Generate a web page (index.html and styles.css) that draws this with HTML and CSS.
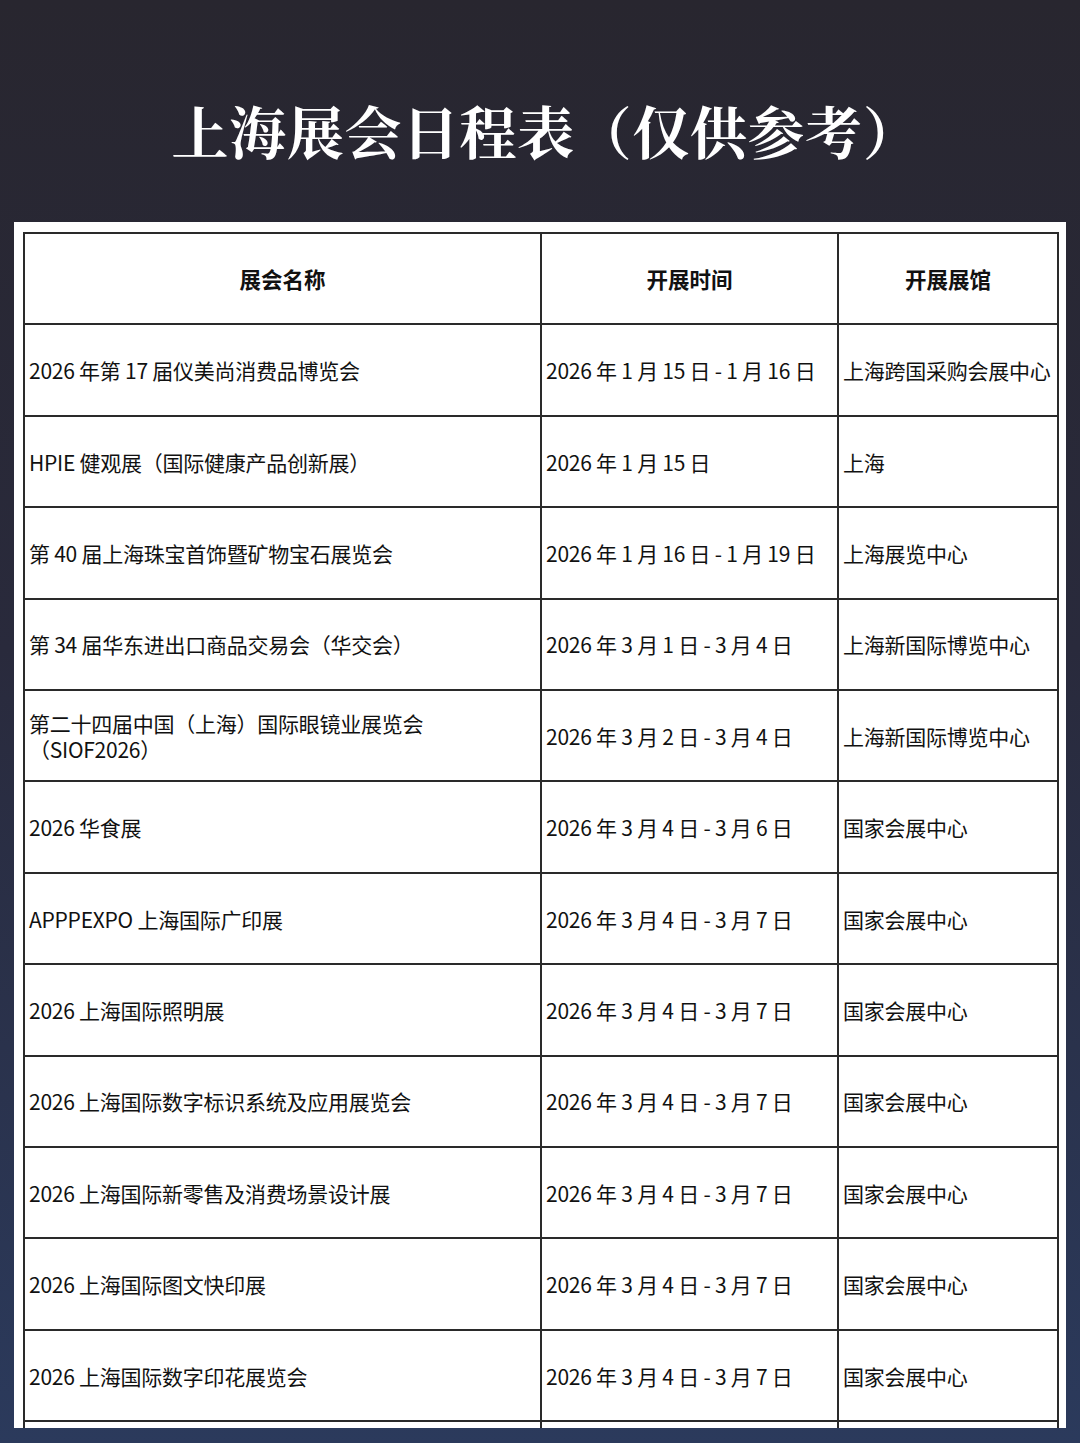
FILE: index.html
```html
<!DOCTYPE html>
<html lang="zh-CN">
<head>
<meta charset="utf-8">
<link rel="stylesheet" href="styles.css">
</head>
<body>
<header class="hero">
  <h1 class="title">上海展会日程表（仅供参考）</h1>
</header>
<main class="panel">
  <table class="schedule">
    <colgroup>
      <col class="c-name"><col class="c-date"><col class="c-venue">
    </colgroup>
    <thead>
      <tr><th>展会名称</th><th>开展时间</th><th>开展展馆</th></tr>
    </thead>
    <tbody>
      <tr><td>2026 年第 17 届仪美尚消费品博览会</td><td>2026 年 1 月 15 日 - 1 月 16 日</td><td>上海跨国采购会展中心</td></tr>
      <tr><td>HPIE 健观展（国际健康产品创新展）</td><td>2026 年 1 月 15 日</td><td>上海</td></tr>
      <tr><td>第 40 届上海珠宝首饰暨矿物宝石展览会</td><td>2026 年 1 月 16 日 - 1 月 19 日</td><td>上海展览中心</td></tr>
      <tr><td>第 34 届华东进出口商品交易会（华交会）</td><td>2026 年 3 月 1 日 - 3 月 4 日</td><td>上海新国际博览中心</td></tr>
      <tr><td><span class="line">第二十四届中国（上海）国际眼镜业展览会</span><span class="line">（SIOF2026）</span></td><td>2026 年 3 月 2 日 - 3 月 4 日</td><td>上海新国际博览中心</td></tr>
      <tr><td>2026 华食展</td><td>2026 年 3 月 4 日 - 3 月 6 日</td><td>国家会展中心</td></tr>
      <tr><td>APPPEXPO 上海国际广印展</td><td>2026 年 3 月 4 日 - 3 月 7 日</td><td>国家会展中心</td></tr>
      <tr><td>2026 上海国际照明展</td><td>2026 年 3 月 4 日 - 3 月 7 日</td><td>国家会展中心</td></tr>
      <tr><td>2026 上海国际数字标识系统及应用展览会</td><td>2026 年 3 月 4 日 - 3 月 7 日</td><td>国家会展中心</td></tr>
      <tr><td>2026 上海国际新零售及消费场景设计展</td><td>2026 年 3 月 4 日 - 3 月 7 日</td><td>国家会展中心</td></tr>
      <tr><td>2026 上海国际图文快印展</td><td>2026 年 3 月 4 日 - 3 月 7 日</td><td>国家会展中心</td></tr>
      <tr><td>2026 上海国际数字印花展览会</td><td>2026 年 3 月 4 日 - 3 月 7 日</td><td>国家会展中心</td></tr>
      <tr><td></td><td></td><td></td></tr>
    </tbody>
  </table>
</main>
</body>
</html>
```

FILE: styles.css
```css
html, body {
  margin: 0;
  padding: 0;
}
body {
  width: 1080px;
  height: 1443px;
  overflow: hidden;
  background: linear-gradient(180deg, #28262f 0%, #292a3c 45%, #2b3a5c 100%);
  font-family: "Noto Sans CJK SC", "Noto Sans", sans-serif;
}
.hero {
  height: 222px;
  display: flex;
  align-items: center;
  justify-content: center;
}
.title {
  margin: 0;
  padding-top: 37px;
  padding-left: 12px;
  color: #ffffff;
  font-family: "Noto Serif CJK SC", "Noto Sans CJK SC", serif;
  font-weight: 700;
  font-size: 57px;
  line-height: 1;
  letter-spacing: 0.6px;
}
.panel {
  margin: 0 14px;
  height: 1206px;
  background: #ffffff;
  padding: 10px 8px 0 9px;
  box-sizing: border-box;
  overflow: hidden;
}
.schedule {
  width: 1034px;
  border-collapse: collapse;
  table-layout: fixed;
  color: #111111;
}
.c-name { width: 517px; }
.c-date { width: 297px; }
.c-venue { width: 220px; }
.schedule th,
.schedule td {
  border: 2px solid #2a2a2a;
  height: 89.42px;
  padding: 0 0 0 4px;
  vertical-align: middle;
  font-size: 21px;
  line-height: 26px;
  font-weight: 400;
  text-align: left;
  white-space: nowrap;
  overflow: hidden;
  letter-spacing: -0.25px;
}
.schedule th {
  text-align: center;
  font-weight: 700;
  font-size: 21.5px;
  padding: 0;
  letter-spacing: 0;
}
.line {
  display: block;
}
```
